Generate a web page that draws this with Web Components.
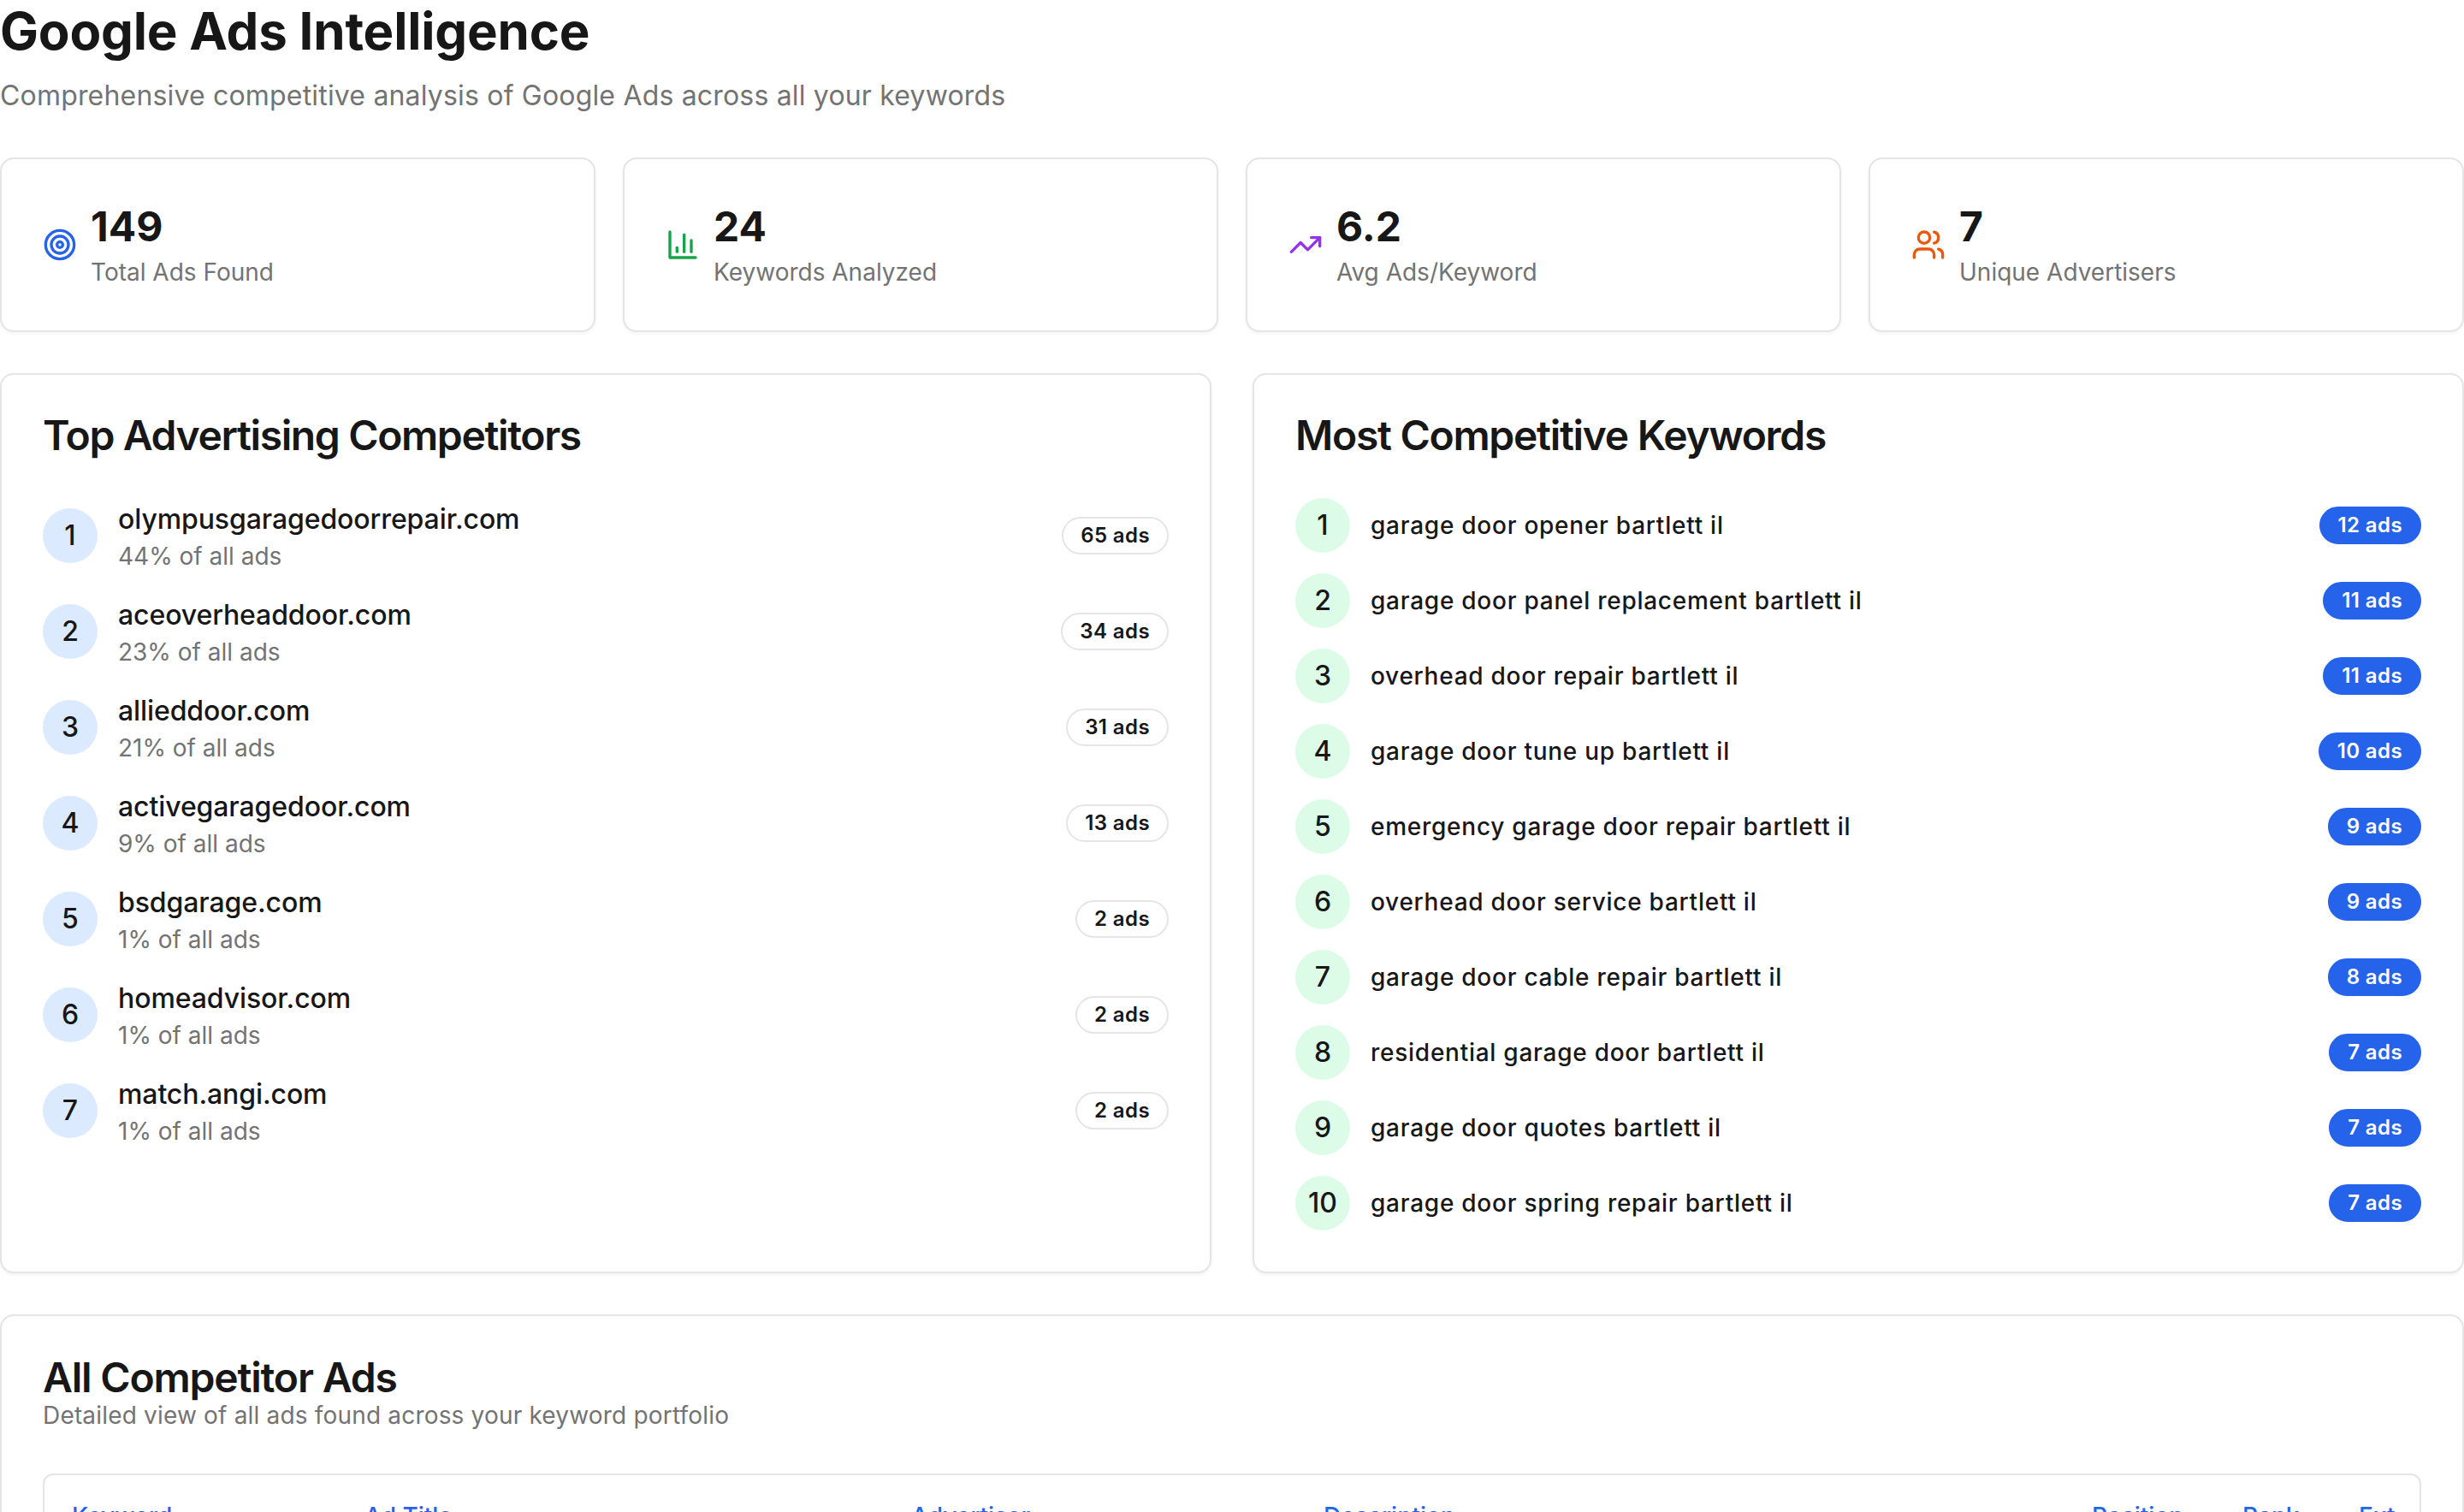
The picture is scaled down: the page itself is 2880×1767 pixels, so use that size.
<!DOCTYPE html>
<html><head><meta charset="utf-8">
<style>
html,body{margin:0;padding:0;background:#fff;height:100%;overflow:hidden}
body{font-family:Inter,"Liberation Sans",sans-serif;color:#171717;-webkit-font-smoothing:antialiased}
</style></head><body>
<ads-page>
  <page-head slot="head" sub="Comprehensive competitive analysis of Google Ads across all your keywords">Google Ads Intelligence</page-head>
  <stat-card icon="target" color="#2563eb" value="149">Total Ads Found</stat-card>
  <stat-card icon="bars" color="#16a34a" value="24">Keywords Analyzed</stat-card>
  <stat-card icon="trend" color="#9333ea" value="6.2">Avg Ads/Keyword</stat-card>
  <stat-card icon="users" color="#ea580c" value="7">Unique Advertisers</stat-card>
  <panel-card slot="left" heading="Top Advertising Competitors" style="--track:-1.38px">
    <competitor-row n="1" name="olympusgaragedoorrepair.com" share="44% of all ads" ads="65 ads"></competitor-row>
    <competitor-row n="2" name="aceoverheaddoor.com" share="23% of all ads" ads="34 ads"></competitor-row>
    <competitor-row n="3" name="allieddoor.com" share="21% of all ads" ads="31 ads"></competitor-row>
    <competitor-row n="4" name="activegaragedoor.com" share="9% of all ads" ads="13 ads"></competitor-row>
    <competitor-row n="5" name="bsdgarage.com" share="1% of all ads" ads="2 ads"></competitor-row>
    <competitor-row n="6" name="homeadvisor.com" share="1% of all ads" ads="2 ads"></competitor-row>
    <competitor-row n="7" name="match.angi.com" share="1% of all ads" ads="2 ads"></competitor-row>
  </panel-card>
  <panel-card slot="right" heading="Most Competitive Keywords">
    <keyword-row n="1" ads="12 ads">garage door opener bartlett il</keyword-row>
    <keyword-row n="2" ads="11 ads">garage door panel replacement bartlett il</keyword-row>
    <keyword-row n="3" ads="11 ads">overhead door repair bartlett il</keyword-row>
    <keyword-row n="4" ads="10 ads">garage door tune up bartlett il</keyword-row>
    <keyword-row n="5" ads="9 ads">emergency garage door repair bartlett il</keyword-row>
    <keyword-row n="6" ads="9 ads">overhead door service bartlett il</keyword-row>
    <keyword-row n="7" ads="8 ads">garage door cable repair bartlett il</keyword-row>
    <keyword-row n="8" ads="7 ads">residential garage door bartlett il</keyword-row>
    <keyword-row n="9" ads="7 ads">garage door quotes bartlett il</keyword-row>
    <keyword-row n="10" ads="7 ads">garage door spring repair bartlett il</keyword-row>
  </panel-card>
  <ads-table slot="table"></ads-table>
</ads-page>
<script>
const ICONS={
 target:'<circle cx="12" cy="12" r="10"/><circle cx="12" cy="12" r="6"/><circle cx="12" cy="12" r="2"/>',
 bars:'<path d="M3 3v18h18"/><path d="M18 17V9"/><path d="M13 17V5"/><path d="M8 17v-3"/>',
 trend:'<polyline points="22 7 13.5 15.5 8.5 10.5 2 17"/><polyline points="16 7 22 7 22 13"/>',
 users:'<path d="M16 21v-2a4 4 0 0 0-4-4H6a4 4 0 0 0-4 4v2"/><circle cx="9" cy="7" r="4"/><path d="M22 21v-2a4 4 0 0 0-3-3.87"/><path d="M16 3.13a4 4 0 0 1 0 7.75"/>'
};
const esc=s=>String(s==null?'':s).replace(/&/g,'&amp;').replace(/</g,'&lt;').replace(/"/g,'&quot;');
function def(name,render){
  customElements.define(name,class extends HTMLElement{
    connectedCallback(){
      if(this.shadowRoot)return;
      this.attachShadow({mode:'open'}).innerHTML=render(a=>esc(this.getAttribute(a)));
    }
  });
}
def('ads-page',()=>`<style>
:host{display:block;width:2880px}
.stats{display:grid;grid-template-columns:repeat(4,696px);gap:32px;margin-bottom:48px}
.panels{display:grid;grid-template-columns:repeat(2,1416px);gap:48px;margin-bottom:48px}
</style>
<slot name="head"></slot>
<div class="stats"><slot></slot></div>
<div class="panels"><slot name="left"></slot><slot name="right"></slot></div>
<slot name="table"></slot>`);
def('page-head',a=>`<style>
:host{display:block;margin-bottom:48px}
h1{margin:0 0 16px;font:700 60px/72px Inter,sans-serif;letter-spacing:-.2px;color:#171717}
p{margin:0;font:400 32px/48px Inter,sans-serif;letter-spacing:.18px;color:#737373}
</style><h1><slot></slot></h1><p>${a('sub')}</p>`);
def('stat-card',a=>`<style>
:host{display:block;box-sizing:border-box;height:204px;background:#fff;border:2px solid #e5e5e5;border-radius:16px;box-shadow:0 2px 4px rgba(0,0,0,.05);padding:48px}
.r{display:flex;align-items:center;gap:16px}
svg{width:40px;height:40px;flex:none;fill:none;stroke:${a('color')};stroke-width:2;stroke-linecap:round;stroke-linejoin:round}
.v{font:700 48px/62px Inter,sans-serif;color:#171717}
.l{font:400 28px/40px Inter,sans-serif;color:#737373;padding-top:2px}
</style><div class="r"><svg viewBox="0 0 24 24">${ICONS[a('icon')]}</svg><div><div class="v">${a('value')}</div><div class="l"><slot></slot></div></div></div>`);
def('panel-card',a=>`<style>
:host{display:block;box-sizing:border-box;background:#fff;border:2px solid #e5e5e5;border-radius:16px;box-shadow:0 2px 4px rgba(0,0,0,.05);padding:48px}
h2{margin:0 0 48px;font:600 48px/46px Inter,sans-serif;padding-bottom:2px;letter-spacing:var(--track,-1.3px);color:#171717}
.list{display:flex;flex-direction:column;gap:24px}
</style><h2>${a('heading')}</h2><div class="list"><slot></slot></div>`);
def('ads-badge',()=>`<style>
:host{display:inline-block;box-sizing:border-box;height:44px;padding:4px 20px;border:2px solid var(--bb,#e5e5e5);border-radius:999px;background:var(--bg,#fff);color:var(--fg,#171717);font:600 24px/32px Inter,sans-serif;letter-spacing:.4px;white-space:nowrap}
</style><slot></slot>`);
def('competitor-row',a=>`<style>
:host{display:flex;align-items:center;justify-content:space-between}
.l{display:flex;align-items:center;gap:24px}
.n{width:64px;height:64px;border-radius:50%;background:#dbeafe;display:flex;align-items:center;justify-content:center;font:500 32px/48px Inter,sans-serif;color:#171717}
.t{font:500 32px/48px Inter,sans-serif;letter-spacing:-.1px;color:#171717;margin:1px 0 -1px}
.s{font:400 28px/40px Inter,sans-serif;color:#737373}
</style><div class="l"><div class="n">${a('n')}</div><div><div class="t">${a('name')}</div><div class="s">${a('share')}</div></div></div><ads-badge>${a('ads')}</ads-badge>`);
def('keyword-row',a=>`<style>
:host{display:flex;align-items:center;justify-content:space-between;height:64px}
.l{display:flex;align-items:center;gap:24px}
.n{width:64px;height:64px;border-radius:50%;background:#dcfce7;display:flex;align-items:center;justify-content:center;font:500 32px/48px Inter,sans-serif;color:#171717}
.t{font:500 28px/40px Inter,sans-serif;letter-spacing:.74px;color:#171717}
ads-badge{--bb:#2563eb;--bg:#2563eb;--fg:#fff}
</style><div class="l"><div class="n">${a('n')}</div><div class="t"><slot></slot></div></div><ads-badge>${a('ads')}</ads-badge>`);
def('ads-table',()=>`<style>
:host{display:block;box-sizing:border-box;height:600px;background:#fff;border:2px solid #e5e5e5;border-radius:16px;box-shadow:0 2px 4px rgba(0,0,0,.05);padding:48px}
h2{margin:0;font:600 48px/48px Inter,sans-serif;letter-spacing:-1.2px;color:#171717}
p{margin:0 0 48px;font:400 28px/40px Inter,sans-serif;letter-spacing:.18px;color:#737373}
.t{border:2px solid #e5e5e5;border-radius:12px;height:300px}
.h{display:grid;grid-template-columns:342px 639px 482px 898px 176px 136px auto;padding:0 32px;height:96px;align-items:center;font:500 28px/40px Inter,sans-serif;color:#2563eb}
</style><h2>All Competitor Ads</h2><p>Detailed view of all ads found across your keyword portfolio</p>
<div class="t"><div class="h"><span>Keyword</span><span>Ad Title</span><span>Advertiser</span><span>Description</span><span>Position</span><span>Rank</span><span>Ext</span></div></div>`);
</script>
</body></html>
